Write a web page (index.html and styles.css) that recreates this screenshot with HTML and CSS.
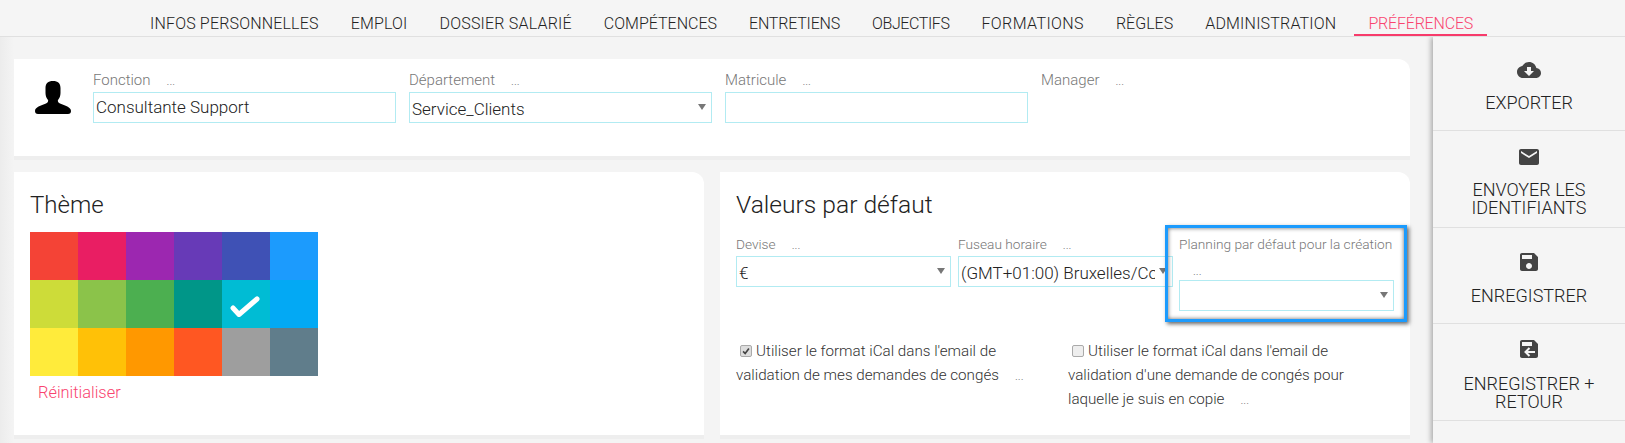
FILE: index.html
```html
<!DOCTYPE html>
<html lang="fr">
<head>
<meta charset="utf-8">
<title>Préférences</title>
<link rel="stylesheet" href="styles.css">
</head>
<body>
<nav class="tabs">
  <a class="tab">INFOS PERSONNELLES</a>
  <a class="tab">EMPLOI</a>
  <a class="tab">DOSSIER SALARIÉ</a>
  <a class="tab">COMPÉTENCES</a>
  <a class="tab">ENTRETIENS</a>
  <a class="tab">OBJECTIFS</a>
  <a class="tab">FORMATIONS</a>
  <a class="tab">RÈGLES</a>
  <a class="tab">ADMINISTRATION</a>
  <a class="tab active">PRÉFÉRENCES</a>
</nav>
<div class="layout">
  <main class="content">
    <section class="card identity">
      <svg class="avatar" viewBox="0 0 36 33"><path d="M18 0c-5 0-7.500 2.500-7.500 7v5c0 3 1 5 2.500 7 .5 1 0 2.500-2 3.500C6 24.500 0 26 0 30c0 2 1 3 3 3h30c2 0 3-1 3-3 0-4-6-5.500-11-7.500-2-1-2.500-2.500-2-3.500 1.500-2 2.500-4 2.500-7V7c0-4.500-2.500-7-7.500-7z"/></svg>
      <div class="identity-fields">
        <div class="field"><div class="label">Fonction<span class="dots">...</span></div><div class="input">Consultante Support</div></div>
        <div class="field"><div class="label">Département<span class="dots">...</span></div><div class="input select">Service_Clients</div></div>
        <div class="field"><div class="label">Matricule<span class="dots">...</span></div><div class="input"></div></div>
        <div class="field"><div class="label">Manager<span class="dots">...</span></div></div>
      </div>
    </section>
    <div class="columns">
      <section class="card theme">
        <h2 class="title">Thème</h2>
        <div class="swatches">
          <i class="c1"></i><i class="c2"></i><i class="c3"></i><i class="c4"></i><i class="c5"></i><i class="c6"></i>
          <i class="c7"></i><i class="c8"></i><i class="c9"></i><i class="c10"></i>
          <i class="c11"><svg viewBox="0 0 30 21"><path d="M3 12l6 6.500L27 3" fill="none" stroke="#fff" stroke-width="5" stroke-linecap="round" stroke-linejoin="round"/></svg></i>
          <i class="c12"></i>
          <i class="c13"></i><i class="c14"></i><i class="c15"></i><i class="c16"></i><i class="c17"></i><i class="c18"></i>
        </div>
        <a class="reset">Réinitialiser</a>
      </section>
      <section class="card defaults">
        <h2 class="title">Valeurs par défaut</h2>
        <div class="default-fields">
          <div class="field"><div class="label">Devise<span class="dots">...</span></div><div class="input select">€</div></div>
          <div class="field"><div class="label">Fuseau horaire<span class="dots">...</span></div><div class="input select clip"><span>(GMT+01:00) Bruxelles/Copenhague</span></div></div>
          <div class="field"><div class="label">Planning par défaut pour la création</div><div class="label second"><span class="dots">...</span></div><div class="input select"></div></div>
          <div class="highlight"></div>
        </div>
        <div class="checks">
          <p class="check"><span class="box on"><svg viewBox="0 0 12 12"><path d="M2.500 6.500l2.500 2.500 4.500-6" fill="none" stroke="#444" stroke-width="2"/></svg></span>Utiliser le format iCal dans l'email de validation de mes demandes de congés<span class="dots">...</span></p>
          <p class="check"><span class="box"></span>Utiliser le format iCal dans l'email de validation d'une demande de congés pour laquelle je suis en copie<span class="dots">...</span></p>
        </div>
      </section>
    </div>
  </main>
  <aside class="side">
    <a class="action">
      <svg viewBox="0 0 24 24"><path d="M19.350 10.040C18.670 6.590 15.640 4 12 4 9.110 4 6.600 5.640 5.350 8.040 2.340 8.360 0 10.910 0 14c0 3.310 2.690 6 6 6h13c2.760 0 5-2.240 5-5 0-2.640-2.050-4.780-4.650-4.960zM17 13l-5 5-5-5h3V9h4v4h3z"/></svg>
      <span>EXPORTER</span>
    </a>
    <a class="action">
      <svg viewBox="0 0 24 24"><path d="M20 4H4c-1.100 0-1.990.9-1.990 2L2 18c0 1.100.9 2 2 2h16c1.100 0 2-.9 2-2V6c0-1.100-.9-2-2-2zm0 4l-8 5-8-5V6l8 5 8-5v2z"/></svg>
      <span>ENVOYER LES IDENTIFIANTS</span>
    </a>
    <a class="action">
      <svg viewBox="0 0 24 24"><path d="M17 3H5c-1.110 0-2 .9-2 2v14c0 1.100.89 2 2 2h14c1.100 0 2-.9 2-2V7l-4-4zm-5 16c-1.660 0-3-1.340-3-3s1.340-3 3-3 3 1.340 3 3-1.340 3-3 3zm3-10H5V5h10v4z"/></svg>
      <span>ENREGISTRER</span>
    </a>
    <a class="action">
      <svg viewBox="0 0 24 24"><path d="M17 3H5c-1.110 0-2 .9-2 2v14c0 1.100.89 2 2 2h14c1.100 0 2-.9 2-2V7l-4-4zm-2 6H5V5h10v4z"/><path d="M18 15H8.500M12.500 11l-4 4 4 4" fill="none" stroke="#f5f5f5" stroke-width="2"/></svg>
      <span>ENREGISTRER + RETOUR</span>
    </a>
  </aside>
</div>
</body>
</html>
```
FILE: styles.css
```css
* { box-sizing: border-box; }
html, body { margin: 0; }
body {
  height: 443px;
  overflow: hidden;
  background: #f5f5f5;
  font-family: Roboto, "Liberation Sans", sans-serif;
  color: #222;
}
.tabs {
  display: flex;
  height: 37px;
  padding-left: 136px;
  border-bottom: 1px solid #e0e0e0;
}
.tab {
  height: 36px;
  padding: 14px 14px 0;
  margin-right: 4px;
  font-size: 16px;
  font-weight: 300;
  line-height: 19px;
  white-space: nowrap;
}
.tab:nth-child(1) { letter-spacing: .17px; }
.tab:nth-child(2) { letter-spacing: .17px; }
.tab:nth-child(3) { letter-spacing: .2px; }
.tab:nth-child(5) { letter-spacing: -.2px; }
.tab:nth-child(6) { letter-spacing: -.4px; }
.tab:nth-child(7) { letter-spacing: .4px; }
.tab:nth-child(9) { letter-spacing: .2px; }
.tab:nth-child(10) { letter-spacing: -.2px; }
.tab.active { color: #f9446f; border-bottom: 2px solid #f73b6b; }
.layout { display: flex; height: 406px; overflow: hidden; }
.content {
  flex: 0 0 1433px;
  padding: 22px 23px 0 14px;
  background: linear-gradient(90deg, #ececec 0, #f4f4f4 14px);
}
.card {
  background: #fff;
  border-top-right-radius: 12px;
  border-bottom: 4px solid #eee;
}
.identity { display: flex; height: 101px; }
.avatar { flex: none; width: 36px; height: 33px; margin: 22px 0 0 21px; }
.identity-fields { display: flex; gap: 13px; margin-left: 22px; padding-top: 11px; }
.identity-fields .field { width: 303px; }
.label { height: 20px; font-size: 13.700px; font-weight: 300; line-height: 20px; color: #777; white-space: nowrap; }
.identity .label { font-size: 15px; }
.dots { font-size: 12px; line-height: 1; margin-left: 16px; color: #777; }
.input {
  position: relative;
  height: 31px;
  margin-top: 2px;
  padding: 0 2px;
  border: 1px solid #b2ebf2;
  font-size: 17px;
  font-weight: 300;
  line-height: 28px;
  white-space: nowrap;
  color: #222;
}
.select { line-height: 33px; }
.select::after {
  content: "";
  position: absolute;
  right: 5px;
  top: 11px;
  border: 4px solid transparent;
  border-top: 6px solid #777;
  border-bottom: 0;
}
.clip span { display: block; width: 194px; overflow: hidden; }
.columns { display: flex; gap: 16px; margin-top: 12px; }
.theme { flex: 0 0 690px; height: 267px; padding: 17px 16px; }
.defaults { flex: 1; height: 267px; padding: 17px 16px; }
.title { margin: 0; font-size: 24px; font-weight: 300; line-height: 32px; }
.defaults .title { font-size: 24.600px; }
.swatches {
  display: grid;
  grid-template-columns: repeat(6, 48px);
  grid-auto-rows: 48px;
  margin-top: 11px;
  width: 288px;
}
.swatches i { display: flex; align-items: center; justify-content: center; }
.swatches svg { width: 30px; height: 21px; margin: 5px 3px 0 0; }
.c1 { background: #f44336; } .c2 { background: #e91e63; } .c3 { background: #9c27b0; }
.c4 { background: #673ab7; } .c5 { background: #3f51b5; } .c6 { background: #1c9bfd; }
.c7 { background: #cddc39; } .c8 { background: #8bc34a; } .c9 { background: #4caf50; }
.c10 { background: #009688; } .c11 { background: #00bcd4; } .c12 { background: #03a9f4; }
.c13 { background: #ffeb3b; } .c14 { background: #ffc107; } .c15 { background: #ff9800; }
.c16 { background: #ff5722; } .c17 { background: #9e9e9e; } .c18 { background: #607d8b; }
.reset { display: block; margin: 7px 0 0 8px; font-size: 16.400px; font-weight: 300; line-height: 20px; color: #f9446f; }
.default-fields { position: relative; display: flex; gap: 7px; margin-top: 13px; height: 87px; }
.default-fields .field { width: 215px; }
.default-fields .field:nth-child(3) { margin-left: -1px; }
.second { height: 24px; line-height: 32px; }
.second .dots { margin-left: 14px; }
.highlight {
  position: absolute;
  left: 429px;
  top: -9px;
  width: 242px;
  height: 97px;
  border: 3px solid #1c9bfd;
  box-shadow: 2px 2px 4px rgba(0,0,0,.6), inset 0 0 4px rgba(0,0,0,.6);
}
.checks { display: grid; grid-template-columns: 300px 300px; column-gap: 32px; margin-top: 18px; }
.check { margin: 0; font-size: 15.200px; font-weight: 300; line-height: 24px; color: #333; }
.box {
  display: inline-block;
  width: 12px;
  height: 12px;
  margin: 0 4px 0 4px;
  vertical-align: -1px;
  border: 1px solid #aaa;
  border-radius: 2px;
  background: #eee;
}
.box.on { background: #ddd; }
.box svg { display: block; width: 10px; height: 10px; }
.side {
  flex: 1;
  position: relative;
  background: #f5f5f5;
  box-shadow: -2px 0 5px rgba(0,0,0,.3);
}
.action {
  display: flex;
  flex-direction: column;
  align-items: center;
  justify-content: center;
  height: 97px;
  padding-top: 3px;
  border-bottom: 1px solid #e0e0e0;
  font-size: 18px;
  font-weight: 300;
  line-height: 18px;
  text-align: center;
  color: #222;
}
.action:first-child { height: 94px; }
.action:nth-child(3) { height: 96px; }
.action svg { flex: none; width: 24px; height: 24px; fill: #444; }
.action span { display: block; margin-top: 12px; width: 160px; }
.action:nth-child(3) span { margin-top: 13px; }
.action:nth-child(4) span { margin-top: 14px; }
```
